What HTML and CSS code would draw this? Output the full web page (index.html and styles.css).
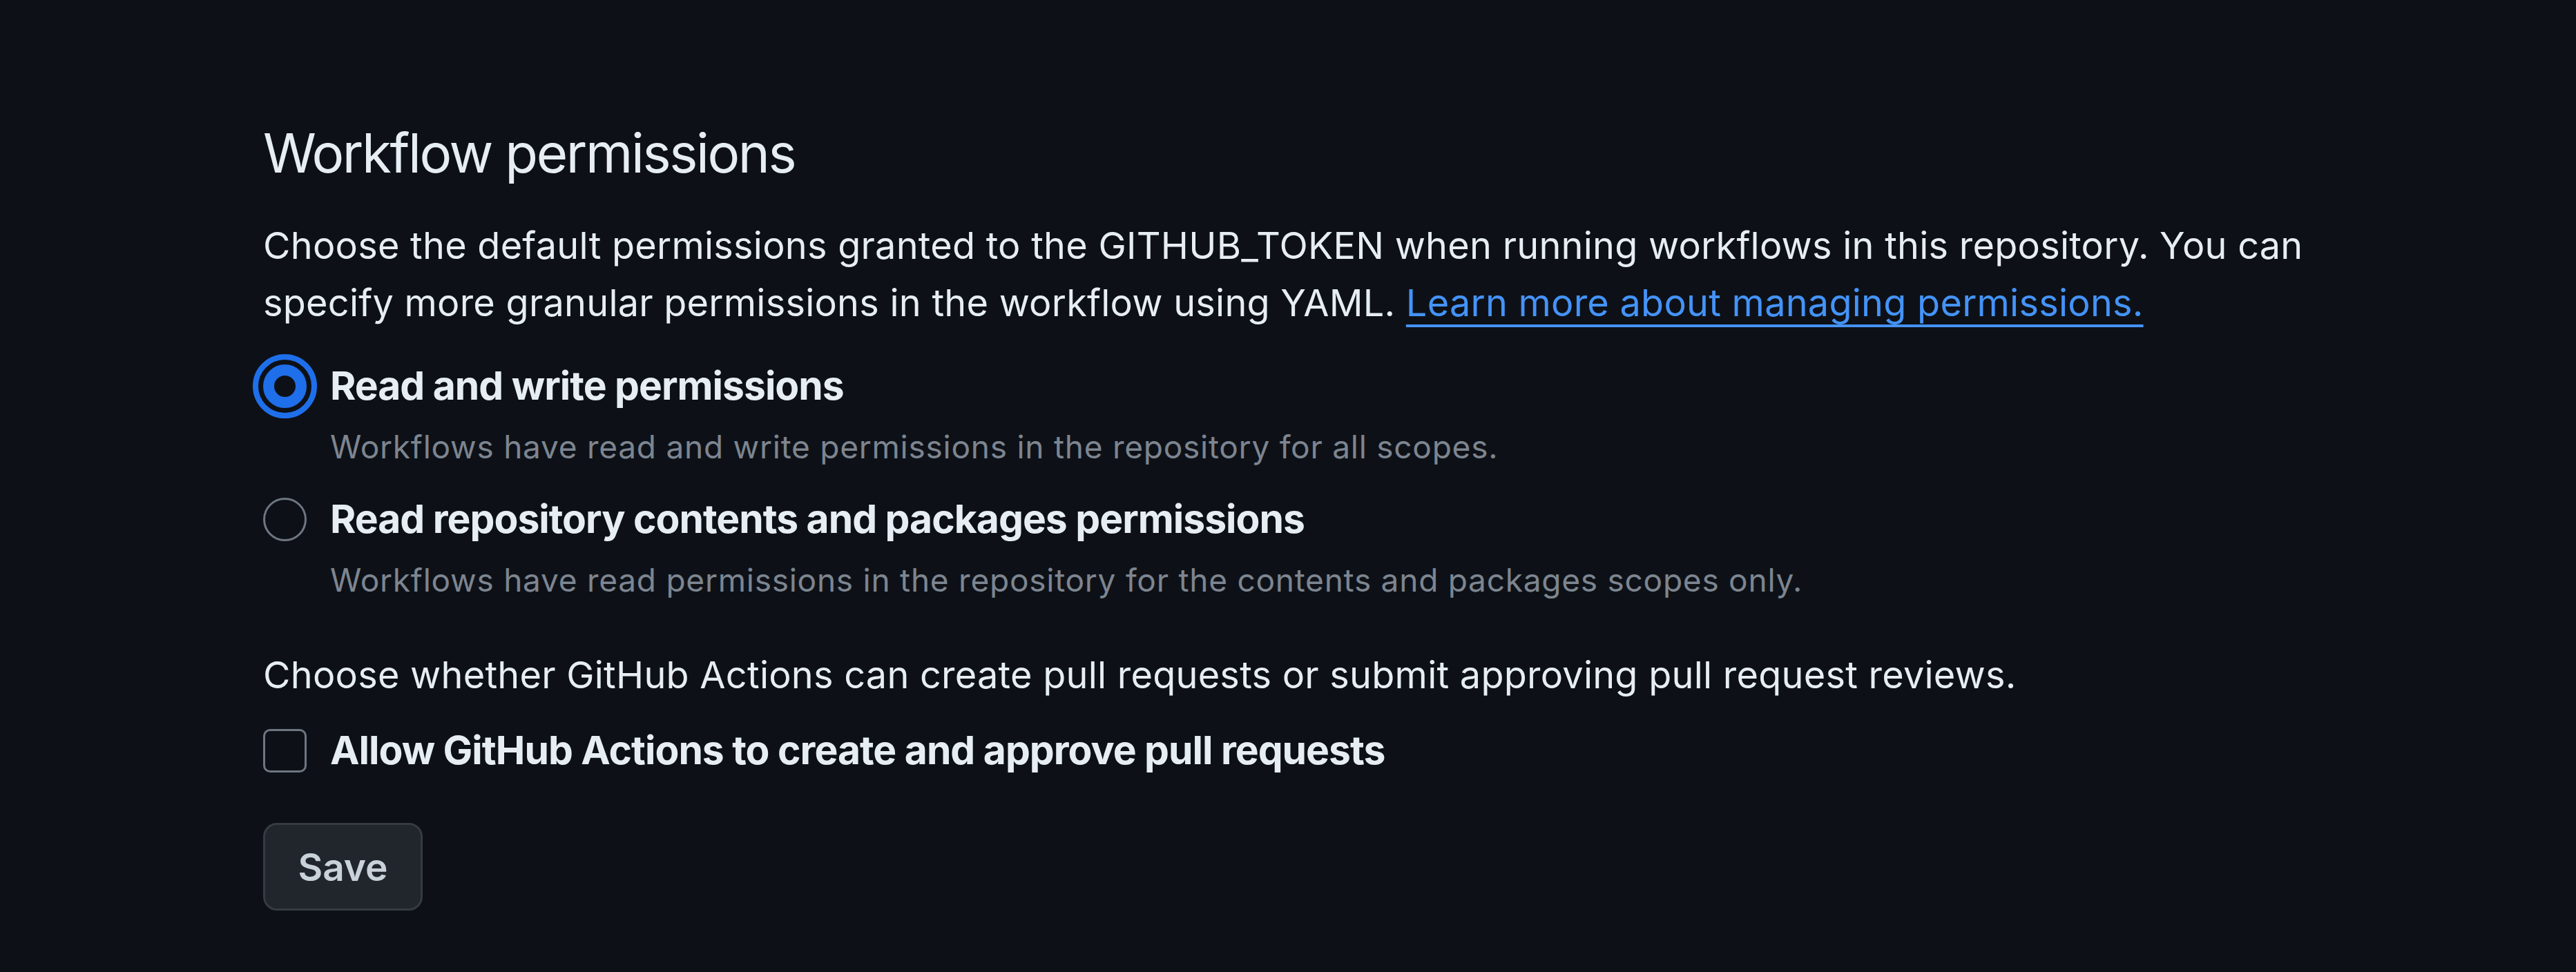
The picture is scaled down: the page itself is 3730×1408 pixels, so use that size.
FILE: index.html
```html
<!DOCTYPE html>
<html lang="en">
<head>
    <meta charset="UTF-8">
    <meta name="viewport" content="width=device-width, initial-scale=1.0">
    <title>Actions settings</title>
    <link rel="stylesheet" href="styles.css">
</head>
<body>

<div class="page">
    <form class="perms">
        <h2 class="title">Workflow permissions</h2>
        <p class="lead">Choose the default permissions granted to the GITHUB_TOKEN when running workflows in this repository. You can specify more granular permissions in the workflow using YAML. <a href="#" class="link">Learn more about managing permissions.</a></p>

        <div class="option first">
            <input type="radio" name="perm" class="radio focused" id="rw" checked>
            <div class="option_text">
                <label for="rw" class="option_label">Read and write permissions</label>
                <p class="note">Workflows have read and write permissions in the repository for all scopes.</p>
            </div>
        </div>

        <div class="option">
            <input type="radio" name="perm" class="radio" id="ro">
            <div class="option_text">
                <label for="ro" class="option_label">Read repository contents and packages permissions</label>
                <p class="note">Workflows have read permissions in the repository for the contents and packages scopes only.</p>
            </div>
        </div>

        <p class="lead second">Choose whether GitHub Actions can create pull requests or submit approving pull request reviews.</p>

        <div class="option check_row">
            <input type="checkbox" class="check" id="pr">
            <label for="pr" class="option_label">Allow GitHub Actions to create and approve pull requests</label>
        </div>

        <button type="button" class="save">Save</button>
    </form>
</div>

</body>
</html>
```

FILE: styles.css
```css
* {
    box-sizing: border-box;
}
body {
    margin: 0;
    background-color: #0d1117;
    color: #e6edf3;
    font-family: Inter, "Noto Sans", sans-serif;
}
.page {
    padding: 172px 0 0 381px;
}
.perms {
    width: 3050px;
}
.title {
    margin: 0;
    font-size: 78px;
    font-weight: 400;
    line-height: 100px;
    letter-spacing: -2.4px;
}
.lead {
    margin: 42px 0 0;
    font-size: 54px;
    line-height: 83px;
    letter-spacing: 0.25px;
}
.lead.second {
    margin-top: 66px;
}
.link {
    color: #4493f8;
    text-decoration: underline;
    text-decoration-thickness: 4px;
    text-underline-offset: 12px;
}
.option {
    display: flex;
    align-items: flex-start;
    gap: 34px;
    margin-top: 40px;
}
.option.first {
    margin-top: 44px;
}
.option_label {
    display: block;
    font-size: 57px;
    font-weight: 700;
    line-height: 70px;
    letter-spacing: -1px;
}
.note {
    margin: 23px 0 0;
    font-size: 46px;
    line-height: 60px;
    letter-spacing: 0.75px;
    color: #7d8590;
}
.radio, .check {
    appearance: none;
    flex: none;
    width: 63px;
    height: 63px;
    margin: 4px 0 0;
    border: 3px solid #6e7681;
    background: transparent;
}
.radio {
    border-radius: 50%;
}
.radio:checked {
    border: 16px solid #1f6feb;
}
.radio.focused {
    outline: 8px solid #1f6feb;
    outline-offset: 7px;
}
.check {
    border-radius: 10px;
}
.check_row {
    margin-top: 33px;
}
.save {
    display: block;
    width: 231px;
    height: 127px;
    margin-top: 70px;
    border: 3px solid #363b42;
    border-radius: 20px;
    background-color: #21262d;
    color: #c9d1d9;
    font-family: Inter, "Noto Sans", sans-serif;
    font-size: 55px;
    font-weight: 600;
    line-height: 70px;
}
```
